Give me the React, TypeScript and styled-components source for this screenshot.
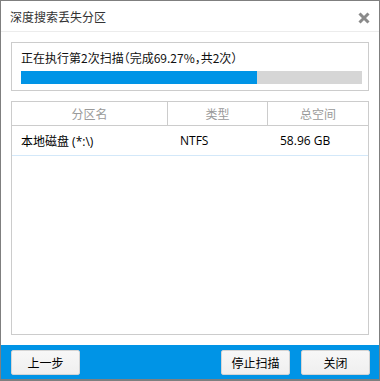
import React from 'react';
import styled, { createGlobalStyle } from 'styled-components';

const GlobalStyle = createGlobalStyle`
    html, body {
        margin: 0;
        padding: 0;
        background: #ffffff;
    }
    body {
        font-family: "Noto Sans CJK SC", "Open Sans", sans-serif;
        font-size: 12px;
    }
`;

const Window = styled.div`
    box-sizing: border-box;
    width: 380px;
    height: 381px;
    border: 1px solid #7f7f7f;
    border-bottom-width: 2px;
    background: #ffffff;
    display: flex;
    flex-direction: column;
`;

const TitleBar = styled.div`
    height: 30px;
    border-bottom: 1px solid #ececec;
    display: flex;
    align-items: center;
    justify-content: space-between;
    padding: 0 9px 0 9px;
    color: #333333;
    font-size: 12px;
`;

const CloseButton = styled.button`
    border: none;
    background: none;
    padding: 0;
    margin-top: 3px;
    width: 12px;
    height: 12px;
    display: flex;
    cursor: pointer;
`;

const Body = styled.div`
    flex: 1;
    display: flex;
    flex-direction: column;
    gap: 10px;
    padding: 10px 10px 10px 10px;
`;

const ProgressBox = styled.div`
    border: 1px solid #cccccc;
    padding: 5px 6px 6px 9px;
`;

const ProgressText = styled.div`
    line-height: 20px;
    color: #111111;
    font-feature-settings: "halt" 1;
`;

const Track = styled.div`
    margin-top: 3px;
    height: 13px;
    background: #d6d6d6;
`;

const Fill = styled.div`
    height: 100%;
    background: #0094e6;
`;

const Table = styled.div`
    flex: 1;
    border: 1px solid #cccccc;
    display: flex;
    flex-direction: column;
`;

const Row = styled.div<{ $header?: boolean }>`
    display: grid;
    grid-template-columns: 156px 100px 1fr;
    height: ${p => (p.$header ? '23px' : '29px')};
    border-bottom: 1px solid ${p => (p.$header ? '#cccccc' : '#d3e8f9')};
`;

const HeadCell = styled.div<{ $last?: boolean }>`
    display: flex;
    align-items: center;
    justify-content: center;
    color: #9a9a9a;
    border-right: ${p => (p.$last ? 'none' : '1px solid #cccccc')};
`;

const Cell = styled.div<{ $pad: number }>`
    display: flex;
    align-items: center;
    padding-left: ${p => p.$pad}px;
    color: #000000;
    font-family: "Open Sans", "Noto Sans CJK SC", sans-serif;
`;

const Footer = styled.div`
    height: 34px;
    background: #0094e6;
    display: flex;
    align-items: center;
    gap: 11px;
    padding: 0 9px 0 10px;
`;

const Spacer = styled.div`
    flex: 1;
`;

const Button = styled.button`
    box-sizing: border-box;
    width: 69px;
    height: 25px;
    border: 1px solid #d4d4d4;
    border-radius: 2px;
    background: linear-gradient(#f7f7f7, #efefef);
    color: #000000;
    font-family: "Noto Sans CJK SC", sans-serif;
    font-size: 12px;
    padding: 0;
    cursor: pointer;
`;

const CloseIcon = () => (
    <svg width="12" height="12" viewBox="0 0 12 12">
        <path d="M1.5 1.5 L10.5 10.5 M10.5 1.5 L1.5 10.5" stroke="#8a8a8a" strokeWidth="3" />
    </svg>
);

const progress = 69.27;

const App: React.FC = () => (
    <>
        <GlobalStyle />
        <Window>
            <TitleBar>
                <span>深度搜索丢失分区</span>
                <CloseButton aria-label="关闭">
                    <CloseIcon />
                </CloseButton>
            </TitleBar>
            <Body>
                <ProgressBox>
                    <ProgressText>正在执行第2次扫描（完成69.27%，共2次）</ProgressText>
                    <Track>
                        <Fill style={{ width: `${progress}%` }} />
                    </Track>
                </ProgressBox>
                <Table>
                    <Row $header>
                        <HeadCell>分区名</HeadCell>
                        <HeadCell>类型</HeadCell>
                        <HeadCell $last>总空间</HeadCell>
                    </Row>
                    <Row>
                        <Cell $pad={9}>本地磁盘 (*:\)</Cell>
                        <Cell $pad={12}>NTFS</Cell>
                        <Cell $pad={12}>58.96 GB</Cell>
                    </Row>
                </Table>
            </Body>
            <Footer>
                <Button>上一步</Button>
                <Spacer />
                <Button>停止扫描</Button>
                <Button>关闭</Button>
            </Footer>
        </Window>
    </>
);

export default App;
